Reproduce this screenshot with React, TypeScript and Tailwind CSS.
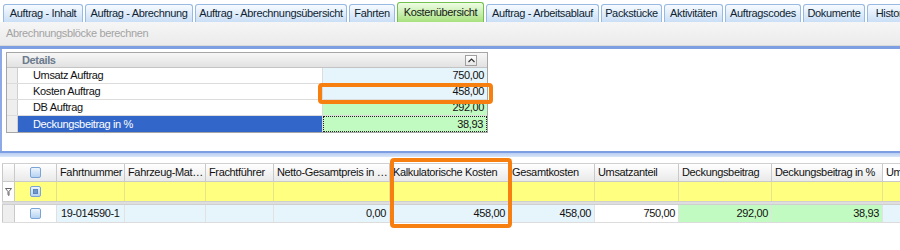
import React from 'react';

const tabs = [
  { label: 'Auftrag - Inhalt', w: 80 },
  { label: 'Auftrag - Abrechnung', w: 108 },
  { label: 'Auftrag - Abrechnungsübersicht', w: 152 },
  { label: 'Fahrten', w: 46 },
  { label: 'Kostenübersicht', w: 87, sel: true },
  { label: 'Auftrag - Arbeitsablauf', w: 113 },
  { label: 'Packstücke', w: 61 },
  { label: 'Aktivitäten', w: 59 },
  { label: 'Auftragscodes', w: 76 },
  { label: 'Dokumente', w: 62 },
  { label: 'Historie', w: 52 },
];

type Col = { label: string; w: number; value: string; bg: string };

const cols: Col[] = [
  { label: 'Fahrtnummer', w: 68, value: '19-014590-1', bg: 'bg-[#e6f4fb]' },
  { label: 'Fahrzeug-Mat…', w: 81, value: '', bg: 'bg-[#e6f4fb]' },
  { label: 'Frachtführer', w: 68, value: '', bg: 'bg-[#e6f4fb]' },
  { label: 'Netto-Gesamtpreis in …', w: 116, value: '0,00', bg: 'bg-[#e6f4fb]' },
  { label: 'Kalkulatorische Kosten', w: 119, value: '458,00', bg: 'bg-[#e6f4fb]' },
  { label: 'Gesamtkosten', w: 86, value: '458,00', bg: 'bg-[#e6f4fb]' },
  { label: 'Umsatzanteil', w: 84, value: '750,00', bg: 'bg-white' },
  { label: 'Deckungsbeitrag', w: 93, value: '292,00', bg: 'bg-[#c2fbc2]' },
  { label: 'Deckungsbeitrag in %', w: 111, value: '38,93', bg: 'bg-[#c2fbc2]' },
  { label: 'Umsatz', w: 60, value: '', bg: 'bg-[#e6f4fb]' },
];

function Checkbox({ filter }: { filter?: boolean }) {
  return (
    <div className="w-[11px] h-[11px] rounded-[2px] border border-[#78a4d6] bg-linear-to-b from-[#eef5fd] to-[#b6d2f1] flex items-center justify-center">
      {filter && <div className="w-[5px] h-[5px] bg-[#6f98cc] border border-[#5a84bb]" />}
    </div>
  );
}

const details = [
  { label: 'Umsatz Auftrag', value: '750,00', vbg: 'bg-[#e6f4fb]' },
  { label: 'Kosten Auftrag', value: '458,00', vbg: 'bg-[#e6f4fb]' },
  { label: 'DB Auftrag', value: '292,00', vbg: 'bg-[#c2fbc2]' },
  { label: 'Deckungsbeitrag in %', value: '38,93', vbg: 'bg-[#c2fbc2]', sel: true },
];

export default function App() {
  return (
    <div className="relative w-[900px] h-[250px] overflow-hidden bg-white font-['Liberation_Sans',Arial,sans-serif] text-[11px] text-[#111] tracking-[-0.35px]">
      {/* Tabs */}
      <div className="h-[22px] flex items-end gap-[2px] pl-[3px] bg-white">
        {tabs.map((t) => (
          <div
            key={t.label}
            style={{ width: t.w }}
            className={
              t.sel
                ? 'shrink-0 h-[20px] rounded-t-[3px] border border-b-0 border-[#74c04e] bg-linear-to-b from-[#effce4] to-[#a8e17f] flex items-center justify-center whitespace-nowrap text-[#102010]'
                : 'shrink-0 h-[18px] rounded-t-[3px] border border-b-0 border-[#97b9e2] bg-linear-to-b from-[#f7fbff] to-[#cadff6] flex items-center justify-center whitespace-nowrap text-[#0f1e33]'
            }
          >
            {t.label}
          </div>
        ))}
      </div>

      {/* Toolbar */}
      <div className="h-[24px] flex items-center px-[6px] bg-linear-to-b from-[#f6f6f6] to-[#ebebeb] border-b border-[#d9d9d9] text-[#a3a3a3]">
        Abrechnungsblöcke berechnen
      </div>
      <div className="h-[3px] bg-[#7d9ee2]" />

      {/* Upper panel */}
      <div className="h-[102px] border-l-2 border-[#8eaae6] pl-[4px] pt-[3px] bg-white">
        <div className="w-[482px] border border-[#a6a6a6]">
          <div className="h-[15px] flex items-center justify-between bg-linear-to-b from-[#f7f7f7] to-[#e2e2e2] border-b border-[#c4c4c4] pl-[15px] pr-[10px]">
            <span className="font-bold text-[#6b7a8c]">Details</span>
            <div className="w-[12px] h-[11px] border border-[#a0a0a0] bg-linear-to-b from-white to-[#e6e6e6] flex items-center justify-center">
              <svg width="7" height="5" viewBox="0 0 7 5">
                <path d="M0.5 4 L3.5 1 L6.5 4" fill="none" stroke="#333" strokeWidth="1.2" />
              </svg>
            </div>
          </div>
          {details.map((d, i) => (
            <div key={d.label} className={`h-[16px] flex ${i < 3 ? 'border-b border-[#dcdcdc]' : ''}`}>
              <div className="w-[11px] shrink-0 bg-[#eeeeee] border-r border-[#cfcfcf]" />
              <div
                className={`w-[305px] shrink-0 flex items-center pl-[15px] border-r border-[#dcdcdc] ${
                  d.sel ? 'bg-[#3267c9] text-white' : 'bg-white'
                }`}
              >
                {d.label}
              </div>
              <div
                className={`flex-1 flex items-center justify-end pr-[3px] ${d.vbg} ${
                  d.sel ? 'border border-dotted border-[#222]' : ''
                }`}
              >
                {d.value}
              </div>
            </div>
          ))}
        </div>
      </div>

      {/* Splitter */}
      <div className="h-[2px] bg-[#7d9ee2]" />
      <div className="h-[4px] bg-linear-to-b from-[#b7cdf3] to-[#dbe7f8]" />
      <div className="h-[6px] bg-white" />

      {/* Grid */}
      <div className="pl-[2px]">
        {/* Header */}
        <div className="h-[19px] flex border-t border-[#d0d0d0]">
          <div className="w-[13px] shrink-0 bg-linear-to-b from-white to-[#e9e9e9] border-x border-b border-[#c9c9c9]" />
          <div className="w-[42px] shrink-0 bg-linear-to-b from-white to-[#e9e9e9] border-r border-b border-[#c9c9c9] flex items-center justify-center">
            <Checkbox />
          </div>
          {cols.map((c, i) => (
            <div
              key={c.label}
              style={{ width: c.w }}
              className={`shrink-0 flex items-center pl-[3px] whitespace-nowrap overflow-hidden border-r border-b border-[#c9c9c9] ${
                i === cols.length - 1 ? 'bg-white' : 'bg-linear-to-b from-white to-[#e9e9e9]'
              }`}
            >
              {c.label}
            </div>
          ))}
        </div>
        {/* Filter row */}
        <div className="h-[19px] flex bg-[#ffff80]">
          <div className="w-[13px] shrink-0 border-x border-[#c9c9c9] bg-white flex items-center justify-center">
            <svg width="7" height="8" viewBox="0 0 7 8">
              <path d="M0.5 0.5 H6.5 L4 3.5 V7.5 L3 6.8 V3.5 Z" fill="none" stroke="#666" strokeWidth="1" />
            </svg>
          </div>
          <div className="w-[42px] shrink-0 border-r border-[#e6e08a] flex items-center justify-center">
            <Checkbox filter />
          </div>
          {cols.map((c) => (
            <div key={c.label} style={{ width: c.w }} className="shrink-0 border-r border-[#e8e48c]" />
          ))}
        </div>
        {/* Separator */}
        <div className="h-[4px] bg-[#dedede] border-y border-[#cfcfcf]" />
        {/* Data row */}
        <div className="h-[18px] flex border-b border-[#dcdcdc]">
          <div className="w-[13px] shrink-0 border-x border-[#c9c9c9] bg-[#eeeeee]" />
          <div className="w-[42px] shrink-0 bg-white border-r border-[#e0e0e0] flex items-center justify-center">
            <Checkbox />
          </div>
          {cols.map((c, i) => (
            <div
              key={c.label}
              style={{ width: c.w }}
              className={`shrink-0 flex items-center border-r border-[#e2e2e2] ${c.bg} ${
                i === 0 ? 'justify-start pl-[4px]' : 'justify-end pr-[3px]'
              }`}
            >
              {c.value}
            </div>
          ))}
        </div>
      </div>

      {/* Orange highlight overlays */}
      <div className="absolute left-[318px] top-[83px] w-[175px] h-[21px] border-[4px] border-[#f77f0f] rounded-[4px]" />
      <div className="absolute left-[390px] top-[158px] w-[122px] h-[70px] border-[4px] border-[#f77f0f] rounded-[4px]" />
    </div>
  );
}
